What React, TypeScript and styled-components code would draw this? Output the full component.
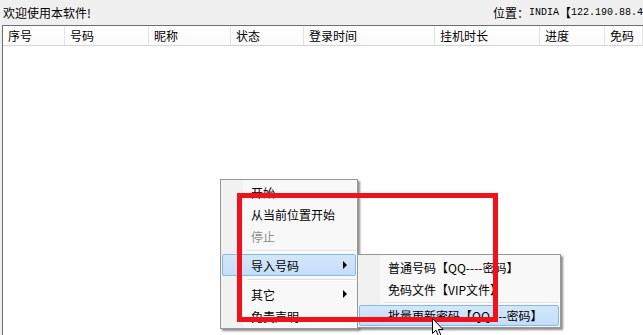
import React from "react";
import styled, { createGlobalStyle } from "styled-components";

const Global = createGlobalStyle`
  html, body { margin: 0; padding: 0; }
  body {
    width: 643px; height: 335px; overflow: hidden;
    background: #f0f0f0;
    font-family: "Noto Sans CJK SC", "Noto Sans", sans-serif;
    font-size: 12px; color: #000;
  }
`;

const Window = styled.div`
  position: relative;
  width: 643px; height: 335px;
  display: flex; flex-direction: column;
  overflow: hidden;
`;

const TopBar = styled.div`
  height: 25px; flex-shrink: 0;
  display: flex; align-items: center; justify-content: space-between;
  padding-left: 3px;
  white-space: nowrap;
  line-height: 1;
`;

const Location = styled.span`
  display: flex; align-items: center;
`;

const Mono = styled.span`
  font-family: "Liberation Mono", monospace;
  font-size: 10px;
  letter-spacing: 0px;
`;

const ListView = styled.div`
  flex: 1;
  margin-left: 2px;
  background: #fff;
  border-top: 1px solid #6e6e6e;
  border-left: 1px solid #6e6e6e;
  display: flex; flex-direction: column;
`;

const Header = styled.div`
  height: 19px; flex-shrink: 0;
  display: flex;
  background: linear-gradient(#ffffff, #fafafa);
  border-bottom: 1px solid #d5d5d5;
`;

const HeadCell = styled.div<{ $w?: number }>`
  ${(p) => (p.$w ? `width: ${p.$w}px; flex-shrink: 0;` : "flex: 1;")}
  box-sizing: border-box;
  padding-left: 5px;
  display: flex; align-items: center;
  border-right: 1px solid #e3e3e3;
  white-space: nowrap;
`;

const Menu = styled.div<{ $left: number; $top: number; $width: number }>`
  position: absolute;
  left: ${(p) => p.$left}px;
  top: ${(p) => p.$top}px;
  width: ${(p) => p.$width}px;
  box-sizing: border-box;
  padding: 1px 1px 1px 1px;
  background: linear-gradient(to right, #f1f1f1 0, #f1f1f1 22px, #f8f8f8 22px);
  border: 1px solid #979797;
  box-shadow: 2px 2px 2px rgba(0, 0, 0, 0.45);
  display: flex; flex-direction: column;
`;

const Item = styled.div<{ $active?: boolean; $disabled?: boolean; $h?: number }>`
  position: relative;
  height: ${(p) => p.$h ?? 22}px;
  box-sizing: border-box;
  display: flex; align-items: center;
  padding-left: 28px;
  padding-right: 10px;
  white-space: nowrap;
  color: ${(p) => (p.$disabled ? "#8d8d8d" : "#000")};
  border: 1px solid ${(p) => (p.$active ? "#84b9ec" : "transparent")};
  border-radius: 2px;
  background: ${(p) => (p.$active ? "linear-gradient(#d3e7fb, #c4ddf8)" : "transparent")};
`;

const Arrow = styled.span`
  position: absolute;
  right: 8px; top: 50%;
  margin-top: -4px;
  width: 0; height: 0;
  border-top: 4px solid transparent;
  border-bottom: 4px solid transparent;
  border-left: 4px solid #000;
`;

const Sep = styled.div<{ $h?: number }>`
  height: ${(p) => p.$h ?? 7}px;
  display: flex; align-items: center;
  padding-left: 25px;
  &::after {
    content: "";
    flex: 1;
    height: 1px;
    background: #e0e0e0;
    border-bottom: 1px solid #ffffff;
  }
`;

const RedBox = styled.div`
  position: absolute;
  left: 237px; top: 193px;
  width: 261px; height: 129px;
  box-sizing: border-box;
  border: 5px solid #f0111a;
  pointer-events: none;
`;

const Cursor = styled.svg`
  position: absolute;
  left: 432px; top: 318px;
`;

const cols: [string, number | undefined][] = [
  ["序号", 62],
  ["号码", 84],
  ["昵称", 82],
  ["状态", 73],
  ["登录时间", 131],
  ["挂机时长", 105],
  ["进度", 65],
  ["免码", undefined],
];

export default function App() {
  return (
    <Window>
      <Global />
      <TopBar>
        <span>欢迎使用本软件!</span>
        <Location>
          位置：<Mono>INDIA</Mono>【<Mono>122.190.88.4</Mono>
        </Location>
      </TopBar>
      <ListView>
        <Header>
          {cols.map(([t, w]) => (
            <HeadCell key={t} $w={w}>
              {t}
            </HeadCell>
          ))}
        </Header>
      </ListView>

      <Menu $left={220} $top={179} $width={138}>
        <Item>开始</Item>
        <Item>从当前位置开始</Item>
        <Item $disabled>停止</Item>
        <Sep />
        <Item $active>
          导入号码
          <Arrow />
        </Item>
        <Sep />
        <Item>
          其它
          <Arrow />
        </Item>
        <Item>免责声明</Item>
      </Menu>

      <Menu $left={357} $top={254} $width={204}>
        <Item>普通号码【QQ----密码】</Item>
        <Item>免码文件【VIP文件】</Item>
        <Sep $h={5} />
        <Item $active $h={21}>批量更新密码【QQ----密码】</Item>
      </Menu>

      <RedBox />

      <Cursor width="13" height="20" viewBox="0 0 13 20">
        <path
          d="M0.5 0.5 L0.5 15.5 L4 12.2 L6.5 18 L8.8 17 L6.4 11.5 L11 11.5 Z"
          fill="#fff"
          stroke="#000"
          strokeWidth="1"
        />
      </Cursor>
    </Window>
  );
}
